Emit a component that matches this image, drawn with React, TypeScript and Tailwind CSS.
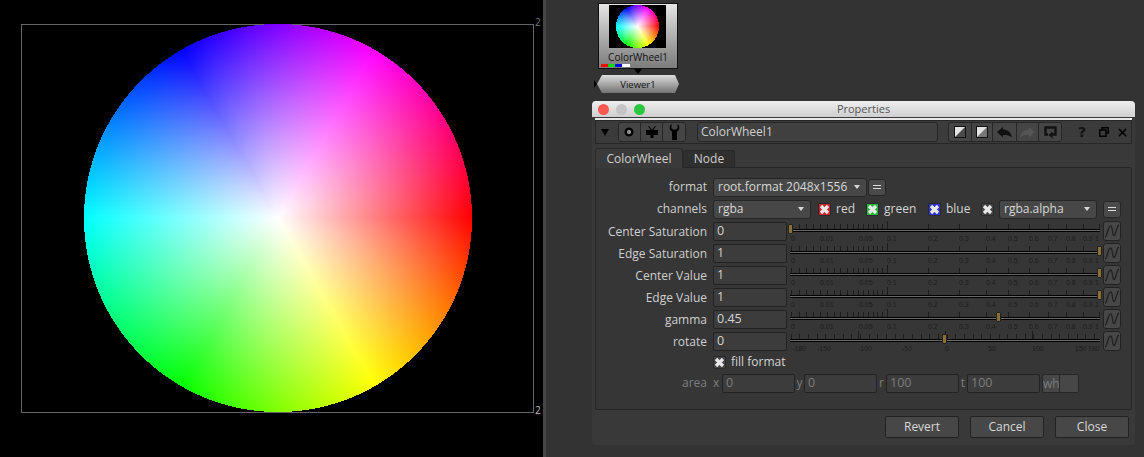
import React, { useEffect, useRef } from 'react';
import { X } from 'lucide-react';

const font = "font-['Open_Sans','Liberation_Sans',sans-serif]";

// draws the hue wheel pixel by pixel
const Wheel = ({ size, className }: { size: number; className?: string }) => {
  const ref = useRef<HTMLCanvasElement>(null);

  useEffect(() => {
    const ctx = ref.current?.getContext('2d');
    if (!ctx) return;
    const img = ctx.createImageData(size, size);
    const c = size / 2;
    for (let y = 0; y < size; y++) {
      for (let x = 0; x < size; x++) {
        const dx = x + 0.5 - c;
        const dy = y + 0.5 - c;
        const sat = Math.sqrt(dx * dx + dy * dy) / c;
        if (sat > 1) continue;
        const h = ((Math.atan2(dy, dx) / Math.PI) * 3 + 6) % 6;
        const k = (n: number) => {
          const t = (n + h) % 6;
          return 1 - sat * Math.max(0, Math.min(t, 4 - t, 1));
        };
        const i = (y * size + x) * 4;
        img.data[i] = k(5) * 255;
        img.data[i + 1] = k(3) * 255;
        img.data[i + 2] = k(1) * 255;
        img.data[i + 3] = 255;
      }
    }
    ctx.putImageData(img, 0, 0);
  }, [size]);

  return <canvas ref={ref} width={size} height={size} className={className} />;
};

const ratioLabels: [string, number][] = [
  ['0', 1], ['0.01', 30], ['0.05', 69], ['0.1', 97], ['0.2', 138], ['0.3', 169], ['0.4', 196],
  ['0.5', 218], ['0.6', 239], ['0.7', 258], ['0.8', 276], ['0.9', 293], ['1', 305],
];
const ratioMinor = [1, 9, 16, 23, 30, 37, 44, 50, 57, 63, 68, 73, 78, 83, 87, 92];
const ratioMajor = [138, 169, 196, 218, 239, 258, 276, 293, 309];

const rotateLabels: [string, number][] = [
  ['-180', 2], ['-150', 27], ['-100', 68], ['-50', 112], ['0', 155], ['50', 198], ['100', 242], ['150', 285], ['180', 298],
];
const rotateTicks = Array.from({ length: 36 }, (_, i) => Math.round(0.8 + i * 8.66));

const Slider = ({ handle, rotate }: { handle: number; rotate?: boolean }) => {
  const labels = rotate ? rotateLabels : ratioLabels;
  const ticks = rotate ? rotateTicks : [...ratioMinor, ...ratioMajor];
  const tall = rotate ? [68, 155, 242] : [97];

  return (
    <div className="relative h-[22px] w-[311px] shrink-0">
      <svg width="311" height="22" className="block">
        {ticks.map((x) => (
          <line key={x} x1={x + 0.5} x2={x + 0.5} y1="3" y2="8" stroke="#1c1c1c" />
        ))}
        {tall.map((x) => (
          <line key={x} x1={x + 0.5} x2={x + 0.5} y1="0" y2="8" stroke="#1c1c1c" />
        ))}
        <rect x="0" y="8" width="310" height="1" fill="#000" />
        <rect x="0" y="9" width="310" height="1" fill="#6a6a6a" />
        <rect x="0" y="10" width="310" height="1" fill="#000" />
        {labels.map(([t, x]) => (
          <text key={t} x={x} y="20" fontSize="7" fill="#1d1d1d" fontFamily="'Liberation Sans', sans-serif">
            {t}
          </text>
        ))}
      </svg>
      <div
        className="absolute top-[3px] h-[10px] w-[5px] rounded-[1px] border border-[#222] bg-[#8a7034]"
        style={{ left: handle }}
      />
    </div>
  );
};

const CurveButton = () => (
  <div className="flex h-[20px] w-[18px] shrink-0 items-center justify-center rounded-[3px] border border-[#222] bg-[#474747]">
    <svg width="16" height="16" viewBox="0 0 16 16" fill="none" stroke="#222" strokeWidth="1.4">
      <path d="M1 14C3 14 4 3 6.5 3S8 12.5 10 12.5 12.5 2.5 15 2" />
    </svg>
  </div>
);

const NumberInput = ({ value, className }: { value: string; className?: string }) => (
  <div
    className={`flex h-[19px] items-center rounded-[2px] border border-[#222] bg-[#3c3c3c] pl-[3px] pt-px text-[12.5px] ${className}`}
  >
    {value}
  </div>
);

const SliderRow = ({ label, value, handle, rotate }: { label: string; value: string; handle: number; rotate?: boolean }) => (
  <div className="flex h-[22px] items-center">
    <div className="mt-px w-[111px] shrink-0 text-right text-[12px] text-[#cfcfcf]">{label}</div>
    <NumberInput value={value} className="ml-[6px] w-[74px] shrink-0 text-[#d4d4d4]" />
    <div className="ml-[3px] mt-[2px]">
      <Slider handle={handle} rotate={rotate} />
    </div>
    <div className="ml-[2px]">
      <CurveButton />
    </div>
  </div>
);

const Check = ({ bg }: { bg: string }) => (
  <span className={`flex h-[13px] w-[13px] shrink-0 items-center justify-center rounded-[1px] border border-[#2a2a2a] ${bg}`}>
    <svg width="11" height="11" viewBox="0 0 11 11" fill="none" stroke="#e8e8e8" strokeWidth="3.2">
      <path d="M2 2L9 9M9 2L2 9" />
    </svg>
  </span>
);

const Dropdown = ({ label, className }: { label: string; className?: string }) => (
  <div
    className={`flex h-[19px] items-center justify-between rounded-[3px] border border-[#262626] bg-[#474747] pl-[4px] pr-[6px] text-[12px] text-[#d8d8d8] ${className}`}
  >
    <span>{label}</span>
    <span className="h-0 w-0 border-x-[3px] border-t-[4px] border-x-transparent border-t-[#d8d8d8]" />
  </div>
);

const EqButton = () => (
  <div className="flex h-[17px] w-[18px] shrink-0 flex-col items-center justify-center gap-[2px] rounded-[3px] border border-[#262626] bg-[#4a4a4a]">
    <span className="h-px w-[8px] bg-[#dddddd]" />
    <span className="h-px w-[8px] bg-[#dddddd]" />
  </div>
);

const DialogButton = ({ label }: { label: string }) => (
  <div className="flex h-[22px] w-[74px] items-center justify-center rounded-[2px] border border-[#222] bg-[#474747] text-[12px] text-[#d8d8d8]">
    {label}
  </div>
);

const ToolButton = ({ children, w = 22 }: { children: React.ReactNode; w?: number }) => (
  <div className="flex h-full items-center justify-center border-r border-[#262626] last:border-r-0" style={{ width: w }}>
    {children}
  </div>
);

const SplitSquare = ({ shade }: { shade: string }) => (
  <svg width="12" height="12" viewBox="0 0 12 12">
    <rect x="0.5" y="0.5" width="11" height="11" fill="#e4e4e4" stroke="#111" />
    <path d="M1 11L11 1V11Z" fill={shade} />
  </svg>
);

const UndoIcon = ({ color, flip }: { color: string; flip?: boolean }) => (
  <svg width="15" height="11" viewBox="0 0 15 11" fill={color} style={flip ? { transform: 'scaleX(-1)' } : undefined}>
    <path d="M0 5L6 0V2.5C10 2.5 14 4.5 15 10.5C13 8.5 10 8 6 8V10.5Z" />
  </svg>
);

const App = () => {
  return (
    <div className={`flex h-[457px] w-[1144px] overflow-hidden bg-[#333333] ${font}`}>
      {/* viewer */}
      <div className="h-full w-[543px] shrink-0 bg-black pl-[21px] pt-[24px]">
        <div className="relative flex h-[389px] w-[513px] justify-center border border-[#666666]">
          <Wheel size={388} className="block h-[388px] w-[388px] -translate-y-px" />
          <span className="absolute -top-[8px] left-[513px] text-[10px] leading-none text-[#777777]">2</span>
          <span className="absolute -bottom-[3px] left-[513px] text-[10px] leading-none text-[#bbbbbb]">2</span>
        </div>
      </div>
      <div className="h-full w-[3px] shrink-0 bg-[#454545]" />

      {/* node graph + properties */}
      <div className="flex-1 pl-[46px] pt-[3px]">
        <div className="ml-[6px] h-[66px] w-[80px] border border-[#111] bg-gradient-to-b from-[#e6e6e6] to-[#7c7c7c]">
          <div className="relative flex h-full flex-col items-center">
            <div className="ml-[-1px] mt-px flex h-[43px] w-[57px] items-center justify-center bg-black">
              <Wheel size={43} className="block h-[43px] w-[43px]" />
            </div>
            <div className="mt-[3px] text-[10px] leading-[13px] text-[#111]">ColorWheel1</div>
            <div className="absolute bottom-[1px] left-[2px] flex h-[3px]">
              <div className="w-[7px] bg-[#ff0000]" />
              <div className="w-[7px] bg-[#00dd00]" />
              <div className="w-[7px] bg-[#0000ee]" />
              <div className="w-[8px] bg-white" />
            </div>
          </div>
        </div>
        <div className="ml-[42px] h-0 w-0 border-x-[4px] border-t-[5px] border-x-transparent border-t-black" />
        <div className="relative ml-[5px] mt-px h-[18px] w-[82px]">
          <div className="h-full w-full bg-gradient-to-b from-[#dedede] to-[#747474] [clip-path:polygon(5px_0,78px_0,82px_50%,78px_100%,5px_100%,0_50%)]">
            <div className="text-center text-[9.5px] leading-[20px] text-[#111]">Viewer1</div>
          </div>
          <span className="absolute -left-[3px] top-[5px] h-0 w-0 border-y-[4px] border-l-[3px] border-y-transparent border-l-black" />
        </div>

        {/* window */}
        <div className="mt-[8px] h-[344px] w-[543px] rounded-[4px] bg-[#393939]">
          <div className="relative flex h-[16px] items-center gap-[7px] rounded-t-[4px] bg-gradient-to-b from-[#efefef] to-[#cfcfcf] pl-[6px]">
            <span className="h-[11px] w-[11px] rounded-full bg-[#fb5650]" />
            <span className="h-[11px] w-[11px] rounded-full bg-[#c4c4c4]" />
            <span className="h-[11px] w-[11px] rounded-full bg-[#2ac73f]" />
            <span className="absolute inset-x-0 text-center text-[11px] leading-[16px] text-[#555555]">Properties</span>
          </div>

          <div className="px-[3px] pt-px">
            <div className="h-[2px] bg-[#e8e8e8]" />
            {/* toolbar */}
            <div className="flex h-[24px] items-center border border-[#262626] bg-[#3b3b3b] pl-[5px]">
              <span className="h-0 w-0 border-x-[4.5px] border-t-[7px] border-x-transparent border-t-black" />
              <div className="ml-[9px] flex h-[20px] w-[68px] items-center rounded-[3px] border border-[#262626] bg-[#454545]">
                <ToolButton>
                  <svg width="10" height="10" viewBox="0 0 10 10">
                    <circle cx="5" cy="5" r="4.5" fill="#000" />
                    <circle cx="5" cy="5" r="2" fill="#b8b8b8" />
                    <circle cx="5" cy="5" r="0.8" fill="#333" />
                  </svg>
                </ToolButton>
                <ToolButton w={23}>
                  <svg width="12" height="12" viewBox="0 0 12 12" fill="#000">
                    <path d="M3 0L6 4 9 0 9.8 0.6 7.4 4H12V9H7.5V12H4.5V9H0V4H4.6L2.2 0.6Z" />
                  </svg>
                </ToolButton>
                <ToolButton>
                  <svg width="11" height="16" viewBox="0 0 11 16" fill="#000">
                    <path d="M2.5 0C0 2 0 6 3 7.5V16H8V7.5C11 6 11 2 8.5 0V4L7 5.5H4L2.5 4Z" />
                  </svg>
                </ToolButton>
              </div>
              <div className="ml-[11px] flex h-[20px] w-[241px] items-center rounded-[3px] border border-[#262626] bg-[#404040] pl-[3px] text-[12px] text-[#cfcfcf]">
                ColorWheel1
              </div>
              <div className="ml-[10px] flex h-[20px] w-[114px] items-center rounded-[3px] border border-[#262626] bg-[#454545]">
                <ToolButton w={23}><SplitSquare shade="#4a4a4a" /></ToolButton>
                <ToolButton><SplitSquare shade="#777777" /></ToolButton>
                <ToolButton w={24}><UndoIcon color="#111" /></ToolButton>
                <ToolButton w={23}><UndoIcon color="#555555" flip /></ToolButton>
                <ToolButton>
                  <svg width="13" height="13" viewBox="0 0 13 13" fill="none" stroke="#111" strokeWidth="2.4">
                    <path d="M4 8.5H1.5V1.5H11.5V8.5H8" />
                    <path d="M8.5 5.5V12.5L4.5 9Z" fill="#111" stroke="none" />
                  </svg>
                </ToolButton>
              </div>
              <span className="ml-[15px] w-[10px] text-center font-['DejaVu_Sans',sans-serif] text-[14px] font-bold leading-none text-[#111]">?</span>
              <svg className="ml-[12px]" width="10" height="10" viewBox="0 0 10 10" fill="none" stroke="#000" strokeWidth="1.4">
                <path d="M3 2.5V0.7H9.3V6H7M0.7 3H7V9.3H0.7Z" />
              </svg>
              <X className="ml-[7px]" size={13} color="#000" strokeWidth={2.8} />
            </div>

            {/* tabs */}
            <div className="mt-[4px] flex h-[19px] items-end">
              <div className="z-10 -mb-px flex h-[20px] w-[88px] items-center justify-center rounded-t-[3px] border border-b-0 border-[#2a2a2a] bg-[#3a3a3a] text-[12px] text-[#d0d0d0]">
                ColorWheel
              </div>
              <div className="flex h-[17px] w-[52px] items-center justify-center rounded-t-[3px] border border-b-0 border-[#2a2a2a] bg-[#2f2f2f] text-[12px] text-[#d0d0d0]">
                Node
              </div>
            </div>

            {/* panel */}
            <div className="h-[243px] rounded-[2px] border border-[#262626] bg-[#363636] pt-[8px]">
              <div className="flex h-[22px] items-center">
                <div className="w-[111px] text-right text-[12px] text-[#cfcfcf]">format</div>
                <Dropdown label="root.format 2048x1556" className="ml-[6px] w-[154px]" />
                <div className="ml-[1px]"><EqButton /></div>
              </div>
              <div className="flex h-[22px] items-center">
                <div className="w-[111px] text-right text-[12px] text-[#cfcfcf]">channels</div>
                <Dropdown label="rgba" className="ml-[6px] w-[98px]" />
                <div className="ml-[7px] flex items-center text-[12px] text-[#d4d4d4]">
                  <Check bg="bg-[#c8242c]" />
                  <span className="ml-[5px] w-[30px]">red</span>
                  <Check bg="bg-[#27b83a]" />
                  <span className="ml-[5px] w-[44px]">green</span>
                  <Check bg="bg-[#2e34c8]" />
                  <span className="ml-[5px] w-[35px]">blue</span>
                  <Check bg="bg-[#444444]" />
                </div>
                <Dropdown label="rgba.alpha" className="ml-[5px] w-[98px]" />
                <div className="ml-[6px]"><EqButton /></div>
              </div>
              <SliderRow label="Center Saturation" value="0" handle={-2} />
              <SliderRow label="Edge Saturation" value="1" handle={307} />
              <SliderRow label="Center Value" value="1" handle={307} />
              <SliderRow label="Edge Value" value="1" handle={307} />
              <SliderRow label="gamma" value="0.45" handle={206} />
              <SliderRow label="rotate" value="0" handle={152} rotate />

              <div className="ml-[117px] flex h-[20px] items-center text-[12px] text-[#d4d4d4]">
                <Check bg="bg-[#444444]" />
                <span className="ml-[5px]">fill format</span>
              </div>

              <div className="flex h-[22px] items-center text-[12px] text-[#7d7d7d]">
                <div className="w-[111px] text-right">area</div>
                <span className="ml-[6px] w-[9px]">x</span>
                <NumberInput value="0" className="w-[73px]" />
                <span className="w-[9px] text-center">y</span>
                <NumberInput value="0" className="w-[73px]" />
                <span className="w-[9px] text-center">r</span>
                <NumberInput value="100" className="w-[73px]" />
                <span className="w-[8px] text-center">t</span>
                <NumberInput value="100" className="w-[73px]" />
                <div className="ml-[2px] flex h-[19px] w-[37px] rounded-[2px] border border-[#262626] bg-[#474747]">
                  <span className="w-[17px] border-r border-[#262626] text-center leading-[17px]">wh</span>
                </div>
              </div>
            </div>

            {/* footer */}
            <div className="mt-[6px] flex justify-end gap-[11px] pr-[3px]">
              <DialogButton label="Revert" />
              <DialogButton label="Cancel" />
              <DialogButton label="Close" />
            </div>
          </div>
        </div>
      </div>
    </div>
  );
};

export default App;
